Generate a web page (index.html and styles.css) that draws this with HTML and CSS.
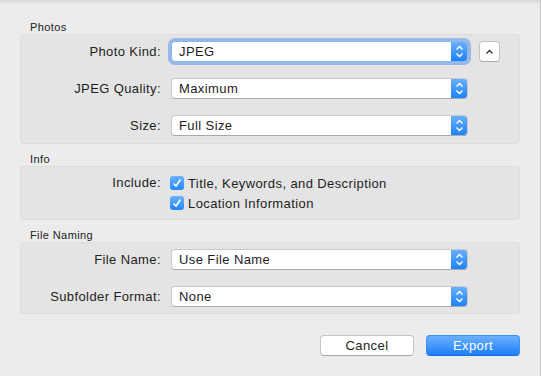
FILE: index.html
```html
<!DOCTYPE html>
<html lang="en">
<head>
    <meta charset="UTF-8">
    <title>Export</title>
    <link rel="stylesheet" href="styles.css">
</head>
<body>
    <div class="window">
        <!-- Photos -->
        <div class="section-title">Photos</div>
        <div class="group group-photos">
            <div class="row">
                <label class="row-label">Photo Kind:</label>
                <div class="popup focused">
                    <span class="popup-value">JPEG</span>
                    <span class="popup-arrows">
                        <svg width="17" height="21" viewBox="0 0 17 21"><path d="M5.5 8.5 L8.5 5.5 L11.5 8.5 M5.5 12.5 L8.5 15.5 L11.5 12.5" fill="none" stroke="#fff" stroke-width="1.4"/></svg>
                    </span>
                </div>
                <button class="disclosure">
                    <svg width="11" height="8" viewBox="0 0 11 8"><path d="M2.5 5.5 L5.5 2.5 L8.5 5.5" fill="none" stroke="#333" stroke-width="1.4"/></svg>
                </button>
            </div>
            <div class="row">
                <label class="row-label">JPEG Quality:</label>
                <div class="popup">
                    <span class="popup-value">Maximum</span>
                    <span class="popup-arrows">
                        <svg width="17" height="21" viewBox="0 0 17 21"><path d="M5.5 8.5 L8.5 5.5 L11.5 8.5 M5.5 12.5 L8.5 15.5 L11.5 12.5" fill="none" stroke="#fff" stroke-width="1.4"/></svg>
                    </span>
                </div>
            </div>
            <div class="row">
                <label class="row-label">Size:</label>
                <div class="popup">
                    <span class="popup-value">Full Size</span>
                    <span class="popup-arrows">
                        <svg width="17" height="21" viewBox="0 0 17 21"><path d="M5.5 8.5 L8.5 5.5 L11.5 8.5 M5.5 12.5 L8.5 15.5 L11.5 12.5" fill="none" stroke="#fff" stroke-width="1.4"/></svg>
                    </span>
                </div>
            </div>
        </div>

        <!-- Info -->
        <div class="section-title">Info</div>
        <div class="group group-info">
            <div class="info-row">
                <label class="row-label check-label">Include:</label>
                <div class="checks">
                    <div class="check-item">
                        <span class="checkbox">
                            <svg width="14" height="14" viewBox="0 0 14 14"><path d="M3.5 7.5 L6 10 L10.5 3.5" fill="none" stroke="#fff" stroke-width="1.6"/></svg>
                        </span>
                        <span>Title, Keywords, and Description</span>
                    </div>
                    <div class="check-item">
                        <span class="checkbox">
                            <svg width="14" height="14" viewBox="0 0 14 14"><path d="M3.5 7.5 L6 10 L10.5 3.5" fill="none" stroke="#fff" stroke-width="1.6"/></svg>
                        </span>
                        <span>Location Information</span>
                    </div>
                </div>
            </div>
        </div>

        <!-- File Naming -->
        <div class="section-title">File Naming</div>
        <div class="group group-naming">
            <div class="row">
                <label class="row-label">File Name:</label>
                <div class="popup">
                    <span class="popup-value">Use File Name</span>
                    <span class="popup-arrows">
                        <svg width="17" height="21" viewBox="0 0 17 21"><path d="M5.5 8.5 L8.5 5.5 L11.5 8.5 M5.5 12.5 L8.5 15.5 L11.5 12.5" fill="none" stroke="#fff" stroke-width="1.4"/></svg>
                    </span>
                </div>
            </div>
            <div class="row">
                <label class="row-label">Subfolder Format:</label>
                <div class="popup">
                    <span class="popup-value">None</span>
                    <span class="popup-arrows">
                        <svg width="17" height="21" viewBox="0 0 17 21"><path d="M5.5 8.5 L8.5 5.5 L11.5 8.5 M5.5 12.5 L8.5 15.5 L11.5 12.5" fill="none" stroke="#fff" stroke-width="1.4"/></svg>
                    </span>
                </div>
            </div>
        </div>

        <div class="actions">
            <button class="btn btn-cancel">Cancel</button>
            <button class="btn btn-export">Export</button>
        </div>
    </div>
</body>
</html>
```

FILE: styles.css
```css
* {
    box-sizing: border-box;
    margin: 0;
    padding: 0;
}

body {
    font-family: "Liberation Sans", Arial, sans-serif;
    font-size: 13px;
    letter-spacing: 0.4px;
    color: #1e1e1e;
    background: #ffffff;
}

.window {
    width: 541px;
    height: 376px;
    padding: 20px 20px 0 20px;
    border-right: 1px solid #c6c6c6;
    background: linear-gradient(#d6d6d6 0, #e6e6e6 3px, #ececec 6px, #ececec 100%);
    display: flex;
    flex-direction: column;
}

.section-title {
    font-size: 11px;
    line-height: 14px;
    padding-left: 10px;
    color: #222;
}

.group {
    background: #e4e4e4;
    border: 1px solid #dddddd;
    border-radius: 4px;
    margin-bottom: 8px;
    display: flex;
    flex-direction: column;
}

.group-photos {
    height: 110px;
    padding-top: 6px;
    gap: 16px;
}

.group-info {
    height: 54px;
    padding-top: 6px;
}

.group-naming {
    height: 72px;
    padding-top: 6px;
    gap: 16px;
}

.row {
    display: flex;
    align-items: center;
    height: 21px;
}

.row-label {
    width: 140px;
    text-align: right;
    margin-right: 10px;
    flex-shrink: 0;
}

.popup {
    width: 297px;
    height: 21px;
    background: #fff;
    border: 1px solid #c9c9c9;
    border-bottom-color: #a9a9a9;
    border-radius: 4px;
    display: flex;
    align-items: center;
    overflow: hidden;
}

.popup.focused {
    box-shadow: 0 0 0 3px rgba(90, 150, 235, 0.55);
    border-color: #8ab4ea;
}

.popup-value {
    flex: 1;
    padding-left: 7px;
}

.popup-arrows {
    width: 17px;
    height: 21px;
    margin-top: -1px;
    margin-right: -1px;
    background: linear-gradient(#6cb2fb, #1b80fa);
    display: flex;
}

.disclosure {
    width: 21px;
    height: 21px;
    margin-left: 11px;
    background: #fff;
    border: 1px solid #c2c2c2;
    border-bottom-color: #a8a8a8;
    border-radius: 4px;
    display: flex;
    align-items: center;
    justify-content: center;
}

.info-row {
    display: flex;
}

.check-label {
    line-height: 20px;
    margin-right: 9px;
}

.checks {
    display: flex;
    flex-direction: column;
}

.check-item {
    display: flex;
    align-items: center;
    height: 20px;
    gap: 4px;
}

.checkbox {
    width: 14px;
    height: 14px;
    border-radius: 3px;
    background: linear-gradient(#6cb2fb, #2286fa);
    display: flex;
}

.actions {
    display: flex;
    justify-content: flex-end;
    gap: 12px;
    margin-top: 13px;
}

.btn {
    width: 94px;
    height: 21px;
    border-radius: 4px;
    font-family: "Liberation Sans", Arial, sans-serif;
    font-size: 13px;
    letter-spacing: 0.4px;
}

.btn-cancel {
    background: #fff;
    color: #1e1e1e;
    border: 1px solid #c4c4c4;
    border-bottom-color: #a8a8a8;
}

.btn-export {
    background: linear-gradient(#6bb0fc, #1c7ff9);
    color: #fff;
    border: 1px solid #3d8ff5;
    border-bottom-color: #1a6fe0;
}
```
